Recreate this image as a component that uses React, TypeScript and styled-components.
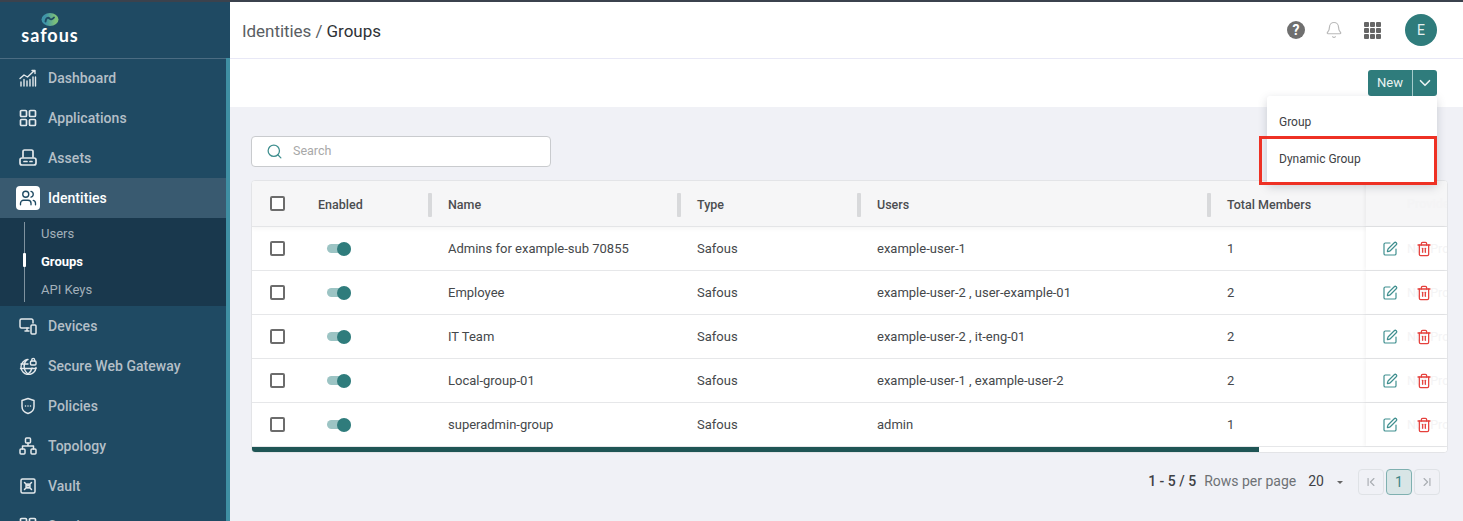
import React from "react";
import styled, { createGlobalStyle } from "styled-components";
import { Bell, ChevronDown, ChevronFirst, ChevronLast, Search, SquarePen, Trash2, Users } from "lucide-react";

const GlobalStyle = createGlobalStyle`
  html, body {
    margin: 0;
    padding: 0;
    height: 521px;
    overflow: hidden;
    font-family: Roboto, "Liberation Sans", sans-serif;
  }
  * {
    box-sizing: border-box;
  }
`;

const Page = styled.div`
  width: 1463px;
  height: 521px;
  display: flex;
  overflow: hidden;
  border-top: 2px solid #3b424d;
  background: #f0f1f6;
`;

const Sidebar = styled.aside`
  width: 230px;
  flex: none;
  display: flex;
  flex-flow: column;
  background: #1f4a63;
  overflow: hidden;
`;

const LogoRow = styled.div`
  height: 56px;
  flex: none;
  box-shadow: 0 1px 0 #4b6c82;
`;

const LogoBox = styled.div`
  width: 100px;
  height: 100%;
  display: flex;
  flex-flow: column;
  align-items: center;
  padding-top: 11px;
`;

const LogoText = styled.div`
  font-family: Lato, sans-serif;
  font-size: 18px;
  font-weight: 700;
  line-height: 16px;
  letter-spacing: 1px;
  color: #fff;
  margin-top: 1px;
`;

const MenuScroll = styled.div`
  flex: 1;
  min-height: 0;
  border-right: 4px solid #3f8fa3;
  display: flex;
  flex-flow: column;
`;

const MenuItem = styled.div<{ $active?: boolean }>`
  height: 40px;
  flex: none;
  display: flex;
  align-items: center;
  gap: 10px;
  padding-left: 18px;
  background: ${(p) => (p.$active ? "#395a70" : "transparent")};
  color: ${(p) => (p.$active ? "#fff" : "#b4bfc7")};
  font-size: 14px;
  font-weight: 500;
  letter-spacing: 0.05px;
`;

const IconBox = styled.span<{ $active?: boolean }>`
  width: 20px;
  height: 24px;
  display: flex;
  align-items: center;
  justify-content: center;
  color: #e4e9ec;
  ${(p) =>
    p.$active
      ? `background: #fff; color: #1f4a63; border-radius: 4px; width: 24px; margin-left: -2px; margin-right: -2px;`
      : ""}
`;

const SubMenu = styled.div`
  flex: none;
  height: 88px;
  padding: 1px 0 0 24px;
  background: #19384d;
  display: flex;
`;

const SubLine = styled.div`
  width: 1px;
  height: 80px;
  margin-top: 3px;
  background: #7f929f;
  position: relative;
`;

const SubList = styled.div`
  display: flex;
  flex-flow: column;
  padding-left: 16px;
`;

const SubItem = styled.div<{ $active?: boolean }>`
  height: 28px;
  display: flex;
  align-items: center;
  font-size: 13px;
  font-weight: ${(p) => (p.$active ? 700 : 400)};
  color: ${(p) => (p.$active ? "#fff" : "#a3b0ba")};
`;

const SubMarker = styled.div`
  position: absolute;
  left: -1px;
  top: 31px;
  width: 3px;
  height: 14px;
  border-radius: 1px;
  background: #fff;
`;

const Main = styled.main`
  flex: 1;
  min-width: 0;
  display: flex;
  flex-flow: column;
  position: relative;
`;

const TopBar = styled.header`
  height: 57px;
  flex: none;
  background: #fff;
  border-bottom: 1px solid #e8e8f6;
  display: flex;
  align-items: center;
  padding: 0 26px 0 12px;
`;

const Breadcrumb = styled.div`
  flex: 1;
  font-size: 17px;
  color: #5a5e63;
  letter-spacing: -0.05px;
  margin-top: 1px;

  strong {
    font-weight: 400;
    color: #2f3236;
  }
`;

const TopIcons = styled.div`
  display: flex;
  align-items: center;
`;

const HelpIcon = styled.div`
  width: 18px;
  height: 18px;
  border-radius: 50%;
  background: #6f6f6f;
  color: #fff;
  font-size: 14px;
  font-weight: 700;
  line-height: 18px;
  text-align: center;
`;

const BellWrap = styled.div`
  margin-left: 20px;
  height: 18px;
  color: #b9b9b9;
`;

const AppsGrid = styled.div`
  margin-left: 21px;
  width: 17px;
  display: grid;
  grid-template-columns: repeat(3, 5px);
  gap: 1px;
`;

const AppsDot = styled.span`
  height: 5px;
  background: #666;
  border-radius: 1px;
`;

const Avatar = styled.div`
  margin-left: 24px;
  width: 32px;
  height: 32px;
  border-radius: 50%;
  background: #2f7c7c;
  color: #e4f0f0;
  font-size: 14px;
  line-height: 32px;
  text-align: center;
`;

const Toolbar = styled.div`
  height: 48px;
  flex: none;
  background: #fff;
  display: flex;
  justify-content: flex-end;
  align-items: flex-start;
  padding: 11px 26px 0 0;
`;

const NewButton = styled.div`
  height: 26px;
  display: flex;
  background: #2f7c7c;
  border-radius: 3px;
  color: #eaf3f3;
  font-size: 13px;
`;

const NewLabel = styled.div`
  width: 45px;
  line-height: 26px;
  text-align: center;
  border-right: 1px solid #a6cccc;
`;

const NewCaret = styled.div`
  width: 24px;
  display: flex;
  align-items: center;
  justify-content: center;
`;

const Menu = styled.div`
  position: absolute;
  left: 1037px;
  top: 94px;
  width: 170px;
  height: 88px;
  background: #fff;
  border-radius: 3px;
  box-shadow: 0 3px 10px rgba(60, 64, 80, 0.22);
  padding-top: 7px;
  z-index: 3;
`;

const MenuOption = styled.div`
  height: 37px;
  padding-left: 12px;
  display: flex;
  align-items: center;
  font-size: 12px;
  color: #3e4145;
`;

const Highlight = styled.div`
  position: absolute;
  left: 1029px;
  top: 134px;
  width: 178px;
  height: 49px;
  border: 3px solid #ee3124;
  z-index: 4;
`;

const Content = styled.div`
  flex: 1;
  min-height: 0;
  padding: 29px 15px 0 21px;
  display: flex;
  flex-flow: column;
`;

const SearchBox = styled.div`
  width: 300px;
  height: 31px;
  flex: none;
  display: flex;
  align-items: center;
  gap: 10px;
  padding-left: 14px;
  background: #fff;
  border: 1px solid #c9cbce;
  border-radius: 4px;
  color: #3f8f8f;
  margin-bottom: 13px;
`;

const SearchText = styled.span`
  font-size: 12.5px;
  color: #a8a8a8;
  margin-top: -2px;
`;

const Table = styled.div`
  flex: none;
  background: #fff;
  border: 1px solid #e3e4e7;
  border-radius: 4px;
  overflow: hidden;
  position: relative;
`;

const cols = "66px 130px 249px 180px 350px 139px 81px";

const HeadRow = styled.div`
  display: grid;
  grid-template-columns: ${cols};
  height: 46px;
  background: #f6f6f7;
  border-bottom: 1px solid #e4e5e7;
  box-shadow: 0 2px 4px rgba(0, 0, 0, 0.04);
  align-items: center;
  font-size: 12.5px;
  font-weight: 500;
  color: #4b4d50;
`;

const HeadCell = styled.div<{ $sep?: boolean }>`
  height: 100%;
  display: flex;
  align-items: center;
  padding-top: 1px;
  position: relative;
  ${(p) =>
    p.$sep
      ? `&::after {
    content: "";
    position: absolute;
    right: 16px;
    top: 12px;
    width: 4px;
    height: 24px;
    border-radius: 1px;
    background: #d8d9db;
  }`
      : ""}
`;

const Row = styled.div`
  display: grid;
  grid-template-columns: ${cols};
  height: 44px;
  border-bottom: 1px solid #e6e7e9;
  align-items: center;
  font-size: 13px;
  color: #45484b;
`;

const TextCell = styled.div`
  margin-top: -1px;
`;

const CheckCell = styled.div`
  display: flex;
  padding-left: 18px;
`;

const CheckBox = styled.div`
  width: 15px;
  height: 15px;
  border: 2px solid #6c6c6c;
  border-radius: 2px;
  background: #fff;
`;

const ToggleCell = styled.div`
  padding-left: 9px;
`;

const Toggle = styled.div`
  width: 24px;
  height: 9px;
  border-radius: 4.5px;
  background: #9cc4c4;
  position: relative;

  &::after {
    content: "";
    position: absolute;
    right: 0;
    top: -2.5px;
    width: 14px;
    height: 14px;
    border-radius: 50%;
    background: #2f7c7c;
  }
`;

const ActionCell = styled.div<{ $head?: boolean }>`
  height: 100%;
  display: flex;
  align-items: center;
  gap: 18px;
  padding-left: 16px;
  position: relative;
  box-shadow: -2px 0 3px rgba(0, 0, 0, 0.04);
  background: ${(p) => (p.$head ? "#f6f6f7" : "#fff")};

  svg {
    position: relative;
  }
`;

const GhostText = styled.span`
  position: absolute;
  left: 41px;
  white-space: nowrap;
  color: #f4f4f5;
  font-size: 12.5px;
`;

const ScrollTrack = styled.div`
  height: 5px;
  background: #fff;
`;

const ScrollThumb = styled.div`
  width: 1007px;
  height: 100%;
  background: #1f5555;
`;

const Pager = styled.div`
  display: flex;
  justify-content: flex-end;
  align-items: center;
  height: 26px;
  margin-top: 16px;
  padding-right: 8px;
  font-size: 14px;
`;

const PagerCount = styled.span`
  font-weight: 500;
  color: #3f4246;
  margin: 0 8px 2px 0;
`;

const PagerLabel = styled.span`
  color: #6e7175;
  margin: 0 12px 2px 0;
`;

const PagerValue = styled.span`
  color: #3f4246;
  margin: 0 13px 2px 0;
`;

const PagerCaret = styled.span`
  width: 0;
  height: 0;
  border-left: 3px solid transparent;
  border-right: 3px solid transparent;
  border-top: 3px solid #666;
  margin-right: 15px;
`;

const PageBtn = styled.div<{ $current?: boolean }>`
  width: 26px;
  height: 26px;
  margin-left: ${(p) => (p.$current ? "2px" : "0")};
  margin-right: ${(p) => (p.$current ? "2px" : "0")};
  display: flex;
  align-items: center;
  justify-content: center;
  border-radius: 4px;
  border: 1px solid ${(p) => (p.$current ? "#7fb0b0" : "#dfe2e6")};
  background: ${(p) => (p.$current ? "#d8e5e6" : "transparent")};
  color: ${(p) => (p.$current ? "#3f8686" : "#a9adb2")};
  font-size: 14px;
`;

const line = {
  fill: "none",
  stroke: "currentColor",
  strokeWidth: 1.7,
  strokeLinecap: "round" as const,
  strokeLinejoin: "round" as const,
};

const DashboardIcon = () => (
  <svg width="18" height="18" viewBox="0 0 18 18" {...line} strokeWidth={1.4}>
    <path d="M1 9.500l4-3.500 3.500 2 7-6.500M13 1.500h3v3" />
    <path d="M2 17v-4M5 17v-6.500M8 17v-5M11 17v-6.500M14 17V8" />
    <path d="M16.500 17V8" />
  </svg>
);

const AppsIcon = () => (
  <svg width="18" height="18" viewBox="0 0 18 18" {...line}>
    <rect x="1.500" y="1.500" width="6" height="6" rx="1" />
    <rect x="10.500" y="1.500" width="6" height="6" rx="1" />
    <rect x="1.500" y="10.500" width="6" height="6" rx="1" />
    <rect x="10.500" y="10.500" width="6" height="6" rx="1" />
  </svg>
);

const AssetsIcon = () => (
  <svg width="18" height="18" viewBox="0 0 18 18" {...line}>
    <path d="M4 8V2.500A1.500 1.500 0 0 1 5.500 1h7A1.500 1.500 0 0 1 14 2.500V8" />
    <rect x="1" y="9" width="16" height="7" rx="2" />
    <path d="M5 12.500h3M11 12.500h2" />
  </svg>
);

const DevicesIcon = () => (
  <svg width="18" height="18" viewBox="0 0 18 18" {...line} strokeWidth={1.5}>
    <path d="M10 11H2.500A1.500 1.500 0 0 1 1 9.500v-6A1.500 1.500 0 0 1 2.500 2h10A1.500 1.500 0 0 1 14 3.500V6" />
    <path d="M6 14h4M8 11v3" />
    <rect x="12" y="8" width="5" height="9" rx="1" />
  </svg>
);

const GatewayIcon = () => (
  <svg width="18" height="18" viewBox="0 0 18 18" {...line} strokeWidth={1.4}>
    <path d="M9 2.500a7.500 7.500 0 1 0 8 8" />
    <path d="M8 2.500c-4 4-4 10.500 1 14.500 2-1.500 3.500-3.500 4-6M2 7h7M1.500 11.500H17" />
    <rect x="11.500" y="4" width="5.500" height="4" rx="1" />
    <path d="M12.800 4V2.800a1.400 1.400 0 0 1 2.800 0V4" />
  </svg>
);

const ShieldIcon = () => (
  <svg width="18" height="18" viewBox="0 0 18 18" {...line} strokeWidth={1.5}>
    <path d="M9 1.500l6 2v6c0 3.500-2.500 6-6 7-3.500-1-6-3.500-6-7v-6z" />
    <path d="M6.500 9h.01M9 9h.01M11.500 9h.01" />
  </svg>
);

const TopologyIcon = () => (
  <svg width="18" height="18" viewBox="0 0 18 18" {...line} strokeWidth={1.5}>
    <rect x="6.500" y="1" width="5" height="5" rx="1" />
    <rect x="1" y="12" width="5" height="5" rx="1" />
    <rect x="12" y="12" width="5" height="5" rx="1" />
    <path d="M9 6v3M3.500 12V9h11v3" />
  </svg>
);

const VaultIcon = () => (
  <svg width="18" height="18" viewBox="0 0 18 18" {...line} strokeWidth={1.5}>
    <rect x="2" y="2" width="14" height="14" rx="1.500" />
    <path d="M5.500 5.500l7 7M12.500 5.500l-7 7" />
    <circle cx="9" cy="9" r="2" />
  </svg>
);

const LogoMark = () => (
  <svg width="18" height="13" viewBox="0 0 18 13">
    <defs>
      <linearGradient id="safousMark" x1="0" x2="1" y1="0" y2="0">
        <stop offset="0.25" stopColor="#3f94a8" />
        <stop offset="0.8" stopColor="#7cc07a" />
      </linearGradient>
    </defs>
    <ellipse cx="9" cy="6.500" rx="8.500" ry="6.500" fill="url(#safousMark)" />
    <path
      d="M4.500 8.500C5 5 7 3.800 8.500 5.500c1 1.200 2.500 1.500 4.500-1"
      fill="none"
      stroke="#1f4a63"
      strokeWidth="1.900"
      strokeLinecap="round"
    />
  </svg>
);

const nav = [
  { label: "Dashboard", icon: <DashboardIcon /> },
  { label: "Applications", icon: <AppsIcon /> },
  { label: "Assets", icon: <AssetsIcon /> },
];

const navAfter = [
  { label: "Devices", icon: <DevicesIcon /> },
  { label: "Secure Web Gateway", icon: <GatewayIcon /> },
  { label: "Policies", icon: <ShieldIcon /> },
  { label: "Topology", icon: <TopologyIcon /> },
  { label: "Vault", icon: <VaultIcon /> },
  { label: "Services", icon: <AppsIcon /> },
];

const rows = [
  { name: "Admins for example-sub 70855", users: "example-user-1", total: 1 },
  { name: "Employee", users: "example-user-2 , user-example-01", total: 2 },
  { name: "IT Team", users: "example-user-2 , it-eng-01", total: 2 },
  { name: "Local-group-01", users: "example-user-1 , example-user-2", total: 2 },
  { name: "superadmin-group", users: "admin", total: 1 },
];

export default function App() {
  return (
    <>
      <GlobalStyle />
      <Page>
        <Sidebar>
          <LogoRow>
            <LogoBox>
              <LogoMark />
              <LogoText>safous</LogoText>
            </LogoBox>
          </LogoRow>
          <MenuScroll>
            {nav.map((n) => (
              <MenuItem key={n.label}>
                <IconBox>{n.icon}</IconBox>
                {n.label}
              </MenuItem>
            ))}
            <MenuItem $active>
              <IconBox $active>
                <Users size={18} strokeWidth={1.8} />
              </IconBox>
              Identities
            </MenuItem>
            <SubMenu>
              <SubLine>
                <SubMarker />
              </SubLine>
              <SubList>
                <SubItem>Users</SubItem>
                <SubItem $active>Groups</SubItem>
                <SubItem>API Keys</SubItem>
              </SubList>
            </SubMenu>
            {navAfter.map((n) => (
              <MenuItem key={n.label}>
                <IconBox>{n.icon}</IconBox>
                {n.label}
              </MenuItem>
            ))}
          </MenuScroll>
        </Sidebar>
        <Main>
          <TopBar>
            <Breadcrumb>
              Identities / <strong>Groups</strong>
            </Breadcrumb>
            <TopIcons>
              <HelpIcon>?</HelpIcon>
              <BellWrap>
                <Bell size={18} strokeWidth={1.6} />
              </BellWrap>
              <AppsGrid>
                {Array.from({ length: 9 }).map((_, i) => (
                  <AppsDot key={i} />
                ))}
              </AppsGrid>
              <Avatar>E</Avatar>
            </TopIcons>
          </TopBar>
          <Toolbar>
            <NewButton>
              <NewLabel>New</NewLabel>
              <NewCaret>
                <ChevronDown size={18} strokeWidth={2.2} />
              </NewCaret>
            </NewButton>
          </Toolbar>
          <Menu>
            <MenuOption>Group</MenuOption>
            <MenuOption>Dynamic Group</MenuOption>
          </Menu>
          <Highlight />
          <Content>
            <SearchBox>
              <Search size={17} strokeWidth={1.8} />
              <SearchText>Search</SearchText>
            </SearchBox>
            <Table>
              <HeadRow>
                <CheckCell>
                  <CheckBox />
                </CheckCell>
                <HeadCell $sep>Enabled</HeadCell>
                <HeadCell $sep>Name</HeadCell>
                <HeadCell $sep>Type</HeadCell>
                <HeadCell $sep>Users</HeadCell>
                <HeadCell>Total Members</HeadCell>
                <ActionCell $head>
                  <GhostText>Provider</GhostText>
                </ActionCell>
              </HeadRow>
              {rows.map((r) => (
                <Row key={r.name}>
                  <CheckCell>
                    <CheckBox />
                  </CheckCell>
                  <ToggleCell>
                    <Toggle />
                  </ToggleCell>
                  <TextCell>{r.name}</TextCell>
                  <TextCell>Safous</TextCell>
                  <TextCell>{r.users}</TextCell>
                  <TextCell>{r.total}</TextCell>
                  <ActionCell>
                    <GhostText>Not Provided</GhostText>
                    <SquarePen size={16} strokeWidth={1.8} color="#3f8f8f" />
                    <Trash2 size={16} strokeWidth={1.9} color="#e5403c" />
                  </ActionCell>
                </Row>
              ))}
              <ScrollTrack>
                <ScrollThumb />
              </ScrollTrack>
            </Table>
            <Pager>
              <PagerCount>1 - 5 / 5</PagerCount>
              <PagerLabel>Rows per page</PagerLabel>
              <PagerValue>20</PagerValue>
              <PagerCaret />
              <PageBtn>
                <ChevronFirst size={14} />
              </PageBtn>
              <PageBtn $current>1</PageBtn>
              <PageBtn>
                <ChevronLast size={14} />
              </PageBtn>
            </Pager>
          </Content>
        </Main>
      </Page>
    </>
  );
}
